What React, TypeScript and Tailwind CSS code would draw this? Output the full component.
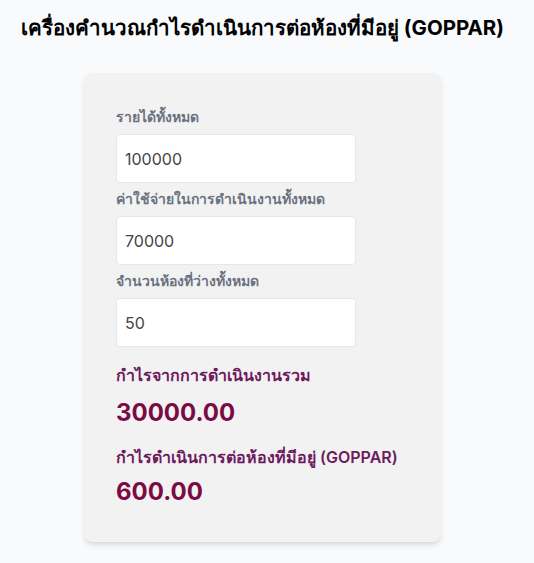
export default function App() {
  const revenue = 100000
  const expenses = 70000
  const rooms = 50
  const profit = revenue - expenses
  const goppar = profit / rooms

  return (
    <div className="min-h-screen bg-[#f8fafc] pr-[9px] font-['Inter','Noto_Sans',sans-serif]">
      <h1 className="pt-[15px] text-center text-[20.5px] font-bold leading-[26px] text-black">
        เครื่องคำนวณกำไรดำเนินการต่อห้องที่มีอยู่ (GOPPAR)
      </h1>

      <div className="mx-auto mt-[32px] w-[357px] rounded-lg bg-[#f2f2f2] px-8 pt-8 pb-[34px] shadow-md">
        <Field label="รายได้ทั้งหมด" value={String(revenue)} />
        <Field label="ค่าใช้จ่ายในการดำเนินงานทั้งหมด" value={String(expenses)} />
        <Field label="จำนวนห้องที่ว่างทั้งหมด" value={String(rooms)} />

        <div className="mt-[16px]">
          <p className="text-[16px] font-semibold leading-[24px] text-[#6e1a5e]">กำไรจากการดำเนินงานรวม</p>
          <p className="mt-[10px] text-[24px] font-bold leading-[32px] text-[#7b0a45]">{profit.toFixed(2)}</p>
          <p className="mt-[16px] text-[16px] font-semibold leading-[24px] text-[#6e1a5e]">
            กำไรดำเนินการต่อห้องที่มีอยู่ (GOPPAR)
          </p>
          <p className="mt-[7px] text-[24px] font-bold leading-[32px] text-[#7b0a45]">{goppar.toFixed(2)}</p>
        </div>
      </div>
    </div>
  )
}

function Field({ label, value }: { label: string; value: string }) {
  return (
    <div className="mb-[4px]">
      <label className="mb-[5px] block text-[14px] font-semibold leading-[24px] text-[#6b7280]">{label}</label>
      <input
        readOnly
        value={value}
        className="h-[49px] w-[240px] rounded border border-[#e5e7eb] bg-white px-[8px] text-[16px] text-[#444] outline-none"
      />
    </div>
  )
}
